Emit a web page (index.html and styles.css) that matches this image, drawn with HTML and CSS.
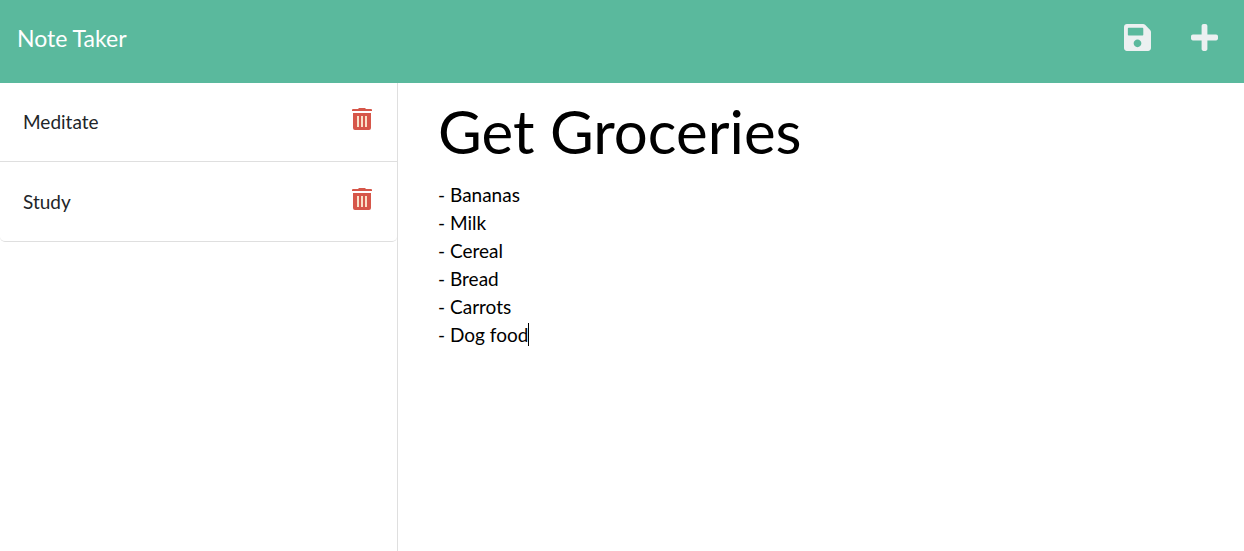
FILE: index.html
```html
<!DOCTYPE html>
<html lang="en">
<head>
<meta charset="utf-8">
<meta name="viewport" content="width=device-width, initial-scale=1">
<title>Note Taker</title>
<link rel="stylesheet" href="styles.css">
</head>
<body>
<header class="navbar">
  <a class="brand" href="/">Note Taker</a>
  <div class="actions">
    <button class="action" type="button" aria-label="Save note">
      <svg class="action-icon" viewBox="0 0 448 448" aria-hidden="true"><path fill-rule="evenodd" d="M434 98 350 14C341 5 329 0 316 0H48C21 0 0 21 0 48V400C0 427 21 448 48 448H400C427 448 448 427 448 400V132C448 119 443 107 434 98ZM224 384C189 384 160 355 160 320S189 256 224 256 288 285 288 320 259 384 224 384ZM320 80V180C320 187 315 192 308 192H76C69 192 64 187 64 180V76C64 69 69 64 76 64H304C313 64 320 71 320 80Z"/></svg>
    </button>
    <button class="action" type="button" aria-label="New note">
      <svg class="action-icon" viewBox="0 0 448 448" aria-hidden="true"><path d="M416 176H272V32C272 14 258 0 240 0H208C190 0 176 14 176 32V176H32C14 176 0 190 0 208V240C0 258 14 272 32 272H176V416C176 434 190 448 208 448H240C258 448 272 434 272 416V272H416C434 272 448 258 448 240V208C448 190 434 176 416 176Z"/></svg>
    </button>
  </div>
</header>
<main class="layout">
  <nav class="sidebar" aria-label="Notes">
    <ul class="notes">
      <li class="note">
        <a class="note-title" href="#meditate">Meditate</a>
        <button class="delete" type="button" aria-label="Delete Meditate">
          <svg class="delete-icon" viewBox="0 0 20 22" aria-hidden="true"><path class="can" d="M1 1H6L7 0H13L14 1H19Q20 1 20 2V3H0V2Q0 1 1 1ZM1 5H19V20Q19 22 17 22H3Q1 22 1 20Z"/><path class="slats" d="M5 8H7V19H5ZM9 8H11V19H9ZM13 8H15V19H13Z"/></svg>
        </button>
      </li>
      <li class="note">
        <a class="note-title" href="#study">Study</a>
        <button class="delete" type="button" aria-label="Delete Study">
          <svg class="delete-icon" viewBox="0 0 20 22" aria-hidden="true"><path class="can" d="M1 1H6L7 0H13L14 1H19Q20 1 20 2V3H0V2Q0 1 1 1ZM1 5H19V20Q19 22 17 22H3Q1 22 1 20Z"/><path class="slats" d="M5 8H7V19H5ZM9 8H11V19H9ZM13 8H15V19H13Z"/></svg>
        </button>
      </li>
    </ul>
  </nav>
  <section class="editor">
    <input class="title-input" type="text" aria-label="Note title" value="Get Groceries">
    <div class="text-wrap">
      <textarea class="text-input" aria-label="Note text" rows="7" spellcheck="false">- Bananas
- Milk
- Cereal
- Bread
- Carrots
- Dog food</textarea>
      <span class="caret" aria-hidden="true"></span>
    </div>
  </section>
</main>
</body>
</html>
```
FILE: styles.css
```css
* {
  box-sizing: border-box;
}

body {
  margin: 0;
  min-height: 100vh;
  display: flex;
  flex-direction: column;
  font-family: Lato, "Liberation Sans", sans-serif;
  font-size: 19px;
  line-height: 28px;
  color: #212529;
  background: #fff;
}

button {
  display: flex;
  padding: 0;
  border: 0;
  background: none;
  cursor: pointer;
}

.navbar {
  display: flex;
  justify-content: space-between;
  align-items: flex-start;
  padding: 24px 26px 31px 17px;
  background: #5ab99d;
}

.brand {
  font-size: 23px;
  color: #fff;
  text-decoration: none;
}

.actions {
  display: flex;
  gap: 40px;
}

.action-icon {
  width: 27px;
  height: 27px;
  fill: #ecf0f1;
}

.layout {
  flex: 1;
  display: flex;
}

.sidebar {
  width: 32%;
  border-right: 1px solid #dfdfdf;
}

.notes {
  margin: 0;
  padding: 0;
  list-style: none;
}

.note {
  display: flex;
  justify-content: space-between;
  align-items: flex-start;
  padding: 25px 25px 25px 23px;
  border-bottom: 1px solid #dfdfdf;
}

.note + .note {
  padding-top: 26px;
}

.note:last-child {
  border-radius: 0 0 5px 5px;
}

.note-title {
  color: inherit;
  text-decoration: none;
}

.delete-icon {
  width: 20px;
  height: 22px;
}

.can {
  fill: #d6574a;
}

.slats {
  fill: #f9e0c8;
}

.editor {
  flex: 1;
  padding: 12px 40px;
}

.title-input,
.text-input {
  display: block;
  width: 100%;
  padding: 0;
  border: 0;
  outline: 0;
  font-family: inherit;
  color: #000;
  background: transparent;
}

.title-input {
  height: 72px;
  font-size: 60px;
}

.text-wrap {
  position: relative;
  margin-top: 14px;
}

.text-input {
  font-size: 19px;
  line-height: 28px;
  resize: none;
  overflow: hidden;
  caret-color: transparent;
}

.caret {
  position: absolute;
  top: 142px;
  left: 90px;
  width: 1px;
  height: 23px;
  background: #000;
}
```
